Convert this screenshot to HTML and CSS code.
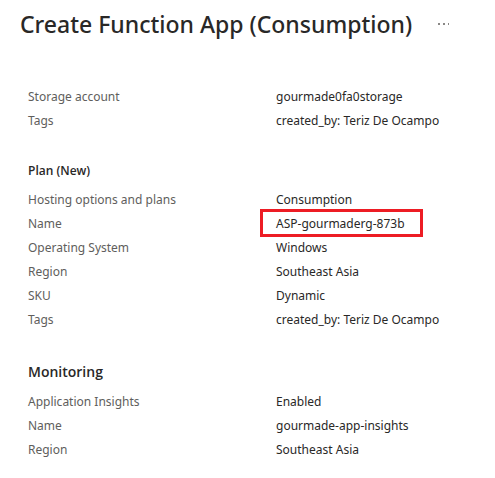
FILE: index.html
```html
<!DOCTYPE html>
<html lang="en">
<head>
<meta charset="utf-8">
<title>Create Function App (Consumption)</title>
<link rel="stylesheet" href="styles.css">
</head>
<body>
<header class="page-header">
  <h1 class="page-title">Create Function App (Consumption)</h1>
  <button class="more" type="button" aria-label="More actions">
    <svg class="more-icon" width="12" height="4" viewBox="0 0 12 4" aria-hidden="true">
      <rect x="0" y="1" width="2" height="2"/><rect x="5" y="1" width="2" height="2"/><rect x="10" y="1" width="1" height="2"/>
    </svg>
  </button>
</header>
<main class="summary">
  <section class="group">
    <dl class="details">
      <dt>Storage account</dt><dd>gourmade0fa0storage</dd>
      <dt>Tags</dt><dd>created_by: Teriz De Ocampo</dd>
    </dl>
  </section>
  <section class="group">
    <h2 class="subheading">Plan (New)</h2>
    <dl class="details">
      <dt>Hosting options and plans</dt><dd>Consumption</dd>
      <dt>Name</dt><dd class="marked">ASP-gourmaderg-873b</dd>
      <dt>Operating System</dt><dd>Windows</dd>
      <dt>Region</dt><dd>Southeast Asia</dd>
      <dt>SKU</dt><dd>Dynamic</dd>
      <dt>Tags</dt><dd>created_by: Teriz De Ocampo</dd>
    </dl>
  </section>
  <section class="group">
    <h2 class="heading">Monitoring</h2>
    <dl class="details">
      <dt>Application Insights</dt><dd>Enabled</dd>
      <dt>Name</dt><dd>gourmade-app-insights</dd>
      <dt>Region</dt><dd>Southeast Asia</dd>
    </dl>
  </section>
</main>
</body>
</html>
```
FILE: styles.css
```css
* {
  box-sizing: border-box;
}

body {
  margin: 0;
  background: #fff;
  color: #292827;
  font: 12px/24px "Noto Sans", "Open Sans", sans-serif;
}

.page-header {
  display: flex;
  align-items: center;
  gap: 20px;
  padding: 8px 20px 0;
}

.page-title {
  margin: 0;
  font-size: 23px;
  font-weight: 500;
  line-height: 32px;
}

.more {
  display: flex;
  padding: 6px;
  border: 0;
  background: none;
}

.more-icon {
  fill: #8a8886;
}

.summary {
  display: flex;
  flex-direction: column;
  gap: 26px;
  padding: 45px 28px 16px;
}

.details {
  display: grid;
  grid-template-columns: 248px 1fr;
  margin: 0;
}

.details dt {
  color: #605e5c;
}

.details dd {
  margin: 0;
}

.subheading,
.heading {
  margin: 0 0 5px;
  font-family: "Open Sans", "Noto Sans", sans-serif;
  font-weight: 600;
}

.subheading {
  font-size: 12px;
}

.heading {
  font-size: 14px;
  line-height: 27px;
}

.details .marked {
  justify-self: start;
  position: relative;
}

.marked::after {
  content: "";
  position: absolute;
  inset: -3px -18px -1px -16px;
  border: 3px solid #ed1c24;
}
```
